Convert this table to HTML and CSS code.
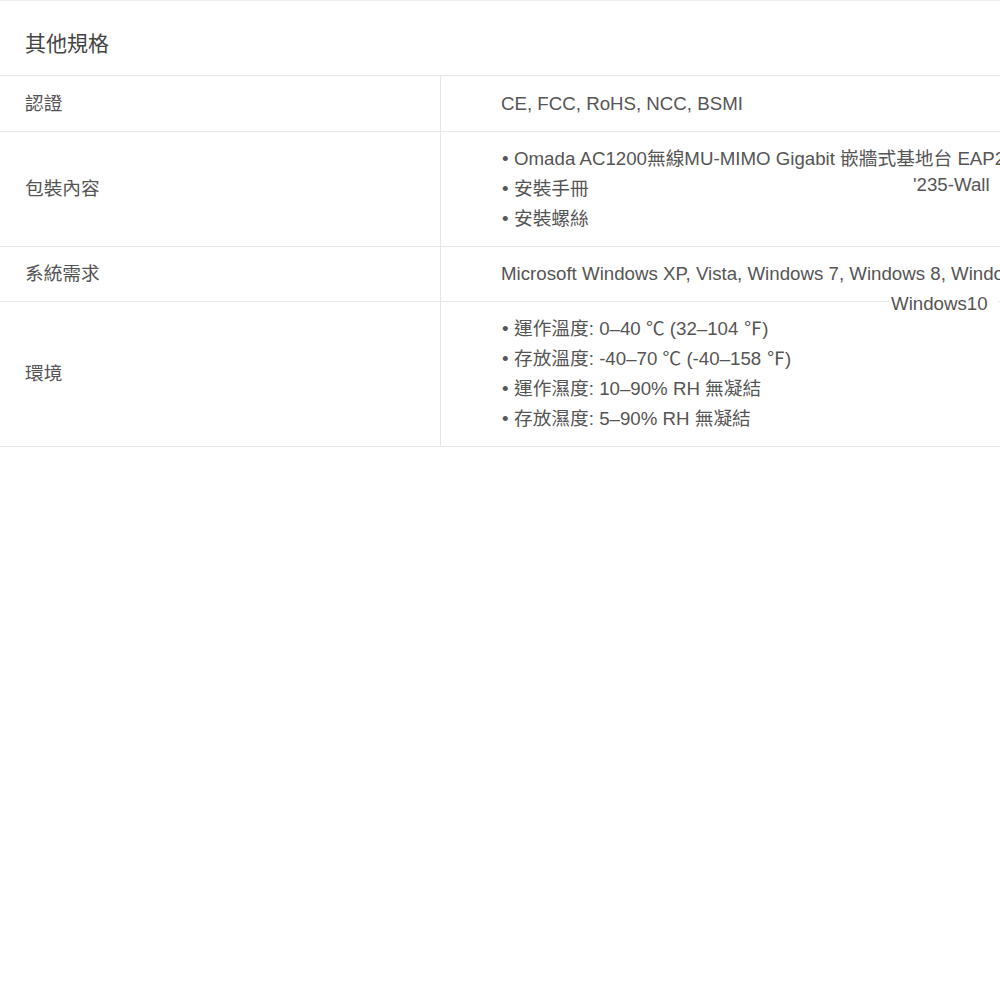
FILE: index.html
```html
<!DOCTYPE html>
<html lang="zh-Hant">
<head>
<meta charset="utf-8">
<title>其他規格</title>
<link rel="stylesheet" href="styles.css">
</head>
<body>
<div class="spec">
  <h2 class="spec-title">其他規格</h2>
  <div class="spec-table">
    <div class="row">
      <div class="label">認證</div>
      <div class="value">CE, FCC, RoHS, NCC, BSMI</div>
    </div>
    <div class="row">
      <div class="label">包裝內容</div>
      <div class="value">
        <ul class="list">
          <li>Omada AC1200無線MU-MIMO Gigabit 嵌牆式基地台 EAP235-Wall</li>
          <li>安裝手冊</li>
          <li>安裝螺絲</li>
        </ul>
        <span class="overflow ov-wall">'235-Wall</span>
      </div>
    </div>
    <div class="row">
      <div class="label">系統需求</div>
      <div class="value">Microsoft Windows XP, Vista, Windows 7, Windows 8, Windows10
        <span class="overflow ov-win">Windows10</span>
      </div>
    </div>
    <div class="row">
      <div class="label">環境</div>
      <div class="value">
        <ul class="list">
          <li>運作溫度: 0–40 ℃ (32–104 ℉)</li>
          <li>存放溫度: -40–70 ℃ (-40–158 ℉)</li>
          <li>運作濕度: 10–90% RH 無凝結</li>
          <li>存放濕度: 5–90% RH 無凝結</li>
        </ul>
      </div>
    </div>
  </div>
</div>
</body>
</html>
```
FILE: styles.css
```css
html, body {
  margin: 0;
  padding: 0;
  background: #fff;
  overflow: hidden;
}
body {
  font-family: "Liberation Sans", Arial, "Noto Sans CJK TC", sans-serif;
  color: #555;
  font-size: 18.7px;
}
.spec {
  width: 1000px;
  overflow: hidden;
  border-top: 1px solid #f0f0f0;
}
.spec-title {
  margin: 0;
  font-weight: normal;
  font-size: 21px;
  color: #444;
  padding: 0 25px;
  height: 75px;
  line-height: 86px;
  box-sizing: border-box;
  border-bottom: 1px solid #e6e6e6;
}
.spec-table {
  display: flex;
  flex-direction: column;
}
.row {
  display: grid;
  grid-template-columns: 441px 1fr;
  border-bottom: 1px solid #e6e6e6;
}
.row:first-child .value {
  padding-top: 13px;
}
.label {
  display: flex;
  align-items: center;
  padding: 0 25px;
  border-right: 1px solid #e6e6e6;
  line-height: 30px;
}
.value {
  position: relative;
  padding: 12px 0 12px 60px;
  line-height: 30px;
  white-space: nowrap;
  min-width: 0;
}
.list {
  list-style: none;
  margin: 0;
  padding: 0;
}
.list li::before {
  content: "•";
  display: inline-block;
  width: 12px;
  margin-left: 1px;
}
.overflow {
  position: absolute;
  background: #fff;
  line-height: 30px;
  padding: 0 10px 0 2px;
}
.ov-wall {
  left: 470px;
  top: 38px;
  padding-right: 20px;
}
.ov-win {
  left: 448px;
  top: 42px;
  z-index: 2;
}
```
